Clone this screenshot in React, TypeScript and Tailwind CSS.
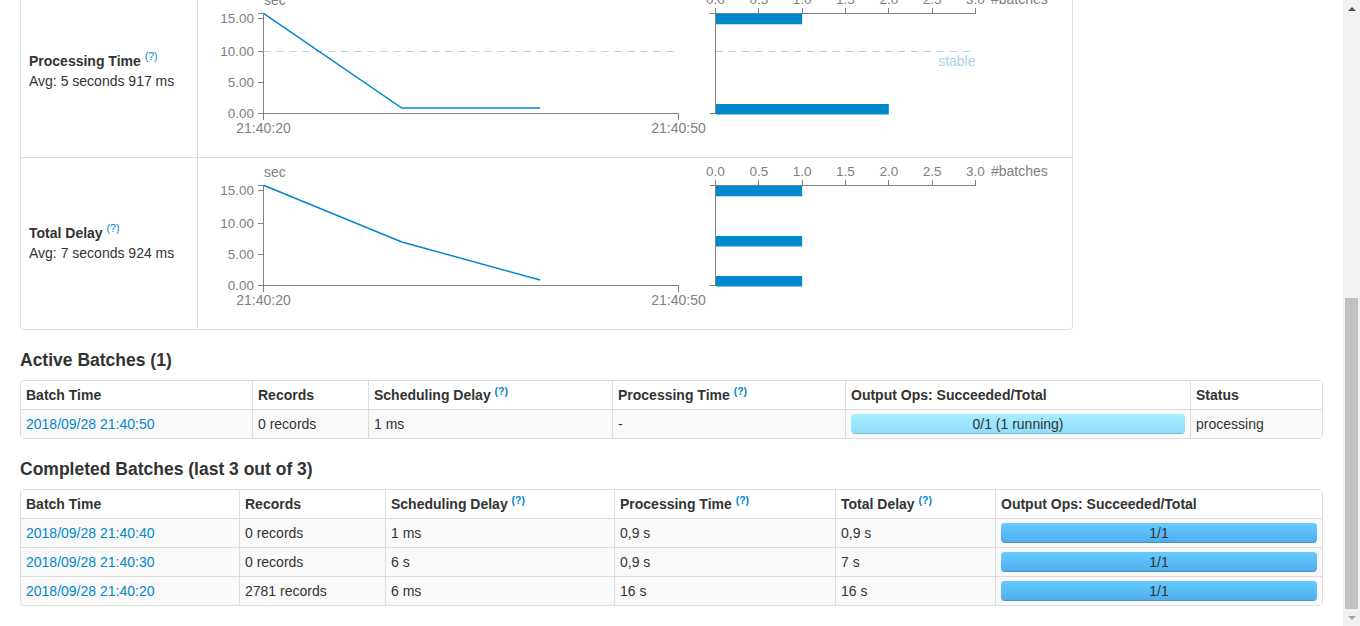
import React from "react";

const AXIS = "#808080";
const BLUE = "#0088cc";
const FONT = "'Liberation Sans', Arial, Helvetica, sans-serif";

type Bar = { y: number; v: number };

const X0 = 65.5;
const X1 = 480.5;
const xt = (i: number) => X0 + ((X1 - X0) * i) / 3;
const HX0 = 517.5;
const hx = (v: number) => HX0 + v * 86.66;

function Chart({
  pts,
  threshold,
  bars,
}: {
  pts: number[];
  threshold: boolean;
  bars: Bar[];
}) {
  const line = pts.map((y, i) => `${xt(i)},${y}`).join(" ");
  const yTicks: [string, number][] = [
    ["0.00", 127.5],
    ["5.00", 96.5],
    ["10.00", 65.5],
    ["15.00", 32.5],
  ];
  const hTicks = [0, 0.5, 1, 1.5, 2, 2.5, 3];
  return (
    <svg width={874} height={171} className="block" style={{ fontFamily: FONT }}>
      {/* line chart */}
      <text x={66} y={19} fontSize={14} fill={AXIS}>
        sec
      </text>
      <path d="M59.5,27.5H65.5V127.5H59.5" stroke={AXIS} fill="none" shapeRendering="crispEdges" />
      {yTicks.map(([l, y]) => (
        <g key={l}>
          <line x1={59.5} x2={65.5} y1={y} y2={y} stroke={AXIS} shapeRendering="crispEdges" />
          <text x={56} y={y} dy="0.32em" textAnchor="end" fontSize={13.5} fill={AXIS}>
            {l}
          </text>
        </g>
      ))}
      <path d="M65.5,133.5V127.5H480.5V133.5" stroke={AXIS} fill="none" shapeRendering="crispEdges" />
      <text x={65.5} y={146.5} textAnchor="middle" fontSize={14} fill={AXIS}>
        21:40:20
      </text>
      <text x={480.5} y={146.5} textAnchor="middle" fontSize={14} fill={AXIS}>
        21:40:50
      </text>
      {threshold && (
        <line x1={65.5} x2={480.5} y1={65.5} y2={65.5} stroke="#a8d4e8" strokeDasharray="7,6" />
      )}
      <polyline points={line} fill="none" stroke={BLUE} strokeWidth={1.5} />

      {/* histogram */}
      <path d={`M${HX0},21.5V27.5H777.5V21.5`} stroke={AXIS} fill="none" shapeRendering="crispEdges" />
      {hTicks.map((v) => (
        <g key={v}>
          <line
            x1={Math.round(hx(v) - 0.5) + 0.5}
            x2={Math.round(hx(v) - 0.5) + 0.5}
            y1={21.5}
            y2={27.5}
            stroke={AXIS}
            shapeRendering="crispEdges"
          />
          <text x={hx(v)} y={18} textAnchor="middle" fontSize={13.5} fill={AXIS}>
            {v.toFixed(1)}
          </text>
        </g>
      ))}
      <text x={793} y={18} fontSize={14} fill={AXIS}>
        #batches
      </text>
      <path d={`M511.5,27.5H${HX0}V127.5H511.5`} stroke={AXIS} fill="none" shapeRendering="crispEdges" />
      {threshold && (
        <>
          <line x1={518} x2={777.5} y1={65.5} y2={65.5} stroke="#a8d4e8" strokeDasharray="7,6" />
          <text x={777.5} y={80} textAnchor="end" fontSize={14} fill="#a8d4e8">
            stable
          </text>
        </>
      )}
      {bars.map((b, i) => (
        <rect key={i} x={518} y={b.y} width={hx(b.v) - 518} height={10.5} fill={BLUE} />
      ))}
    </svg>
  );
}

function Help() {
  return <sup className="text-[#0088cc]">(?)</sup>;
}

function Progress({ label, running }: { label: string; running?: boolean }) {
  return (
    <div className="relative h-[20px] rounded-[4px] overflow-hidden bg-linear-to-b from-[#f5f5f5] to-[#f9f9f9] shadow-[inset_0_1px_2px_rgba(0,0,0,0.1)]">
      <div
        className={
          running
            ? "h-full w-full bg-linear-to-b from-[#a6eeff] to-[#92dcfc] shadow-[inset_0_-1px_0_rgba(0,0,0,0.15)]"
            : "h-full w-full bg-linear-to-b from-[#64cbff] to-[#50acec] shadow-[inset_0_-1px_0_rgba(0,0,0,0.15)]"
        }
      />
      <span className="absolute inset-0 text-center leading-[20px] text-[#333]">{label}</span>
    </div>
  );
}

type Cell = React.ReactNode;

function DataTable({
  cols,
  head,
  rows,
}: {
  cols: string;
  head: Cell[];
  rows: Cell[][];
}) {
  return (
    <div className={`grid ${cols} border border-[#ddd] rounded-[4px] overflow-hidden`}>
      {head.map((h, i) => (
        <div
          key={"h" + i}
          className={`px-[5px] py-[4px] leading-[20px] font-bold bg-white ${i > 0 ? "border-l border-[#ddd]" : ""}`}
        >
          {h}
        </div>
      ))}
      {rows.map((r, ri) =>
        r.map((c, ci) => (
          <div
            key={ri + "-" + ci}
            className={`px-[5px] py-[4px] leading-[20px] h-[29px] bg-[#f9f9f9] border-t border-[#ddd] ${ci > 0 ? "border-l" : ""}`}
          >
            {c}
          </div>
        ))
      )}
    </div>
  );
}

function Link({ children }: { children: React.ReactNode }) {
  return <span className="text-[#0088cc]">{children}</span>;
}

export default function App() {
  const chartRows = [
    {
      label: "Processing Time",
      avg: "Avg: 5 seconds 917 ms",
      pts: [27.3, 122, 122],
      threshold: true,
      bars: [
        { y: 27.8, v: 1 },
        { y: 118, v: 2 },
      ],
    },
    {
      label: "Total Delay",
      avg: "Avg: 7 seconds 924 ms",
      pts: [27.3, 84, 122],
      threshold: false,
      bars: [
        { y: 27.8, v: 1 },
        { y: 78, v: 1 },
        { y: 118, v: 1 },
      ],
    },
  ];

  return (
    <div
      className="flex h-[626px] w-full overflow-hidden bg-white text-[14px] leading-[20px] text-[#333]"
      style={{ fontFamily: FONT }}
    >
      <div className="flex-1 min-w-0 px-[20px]">
        {/* charts table (page is scrolled: its top is cut off) */}
        <div className="-mt-[15px] w-[1053px] border border-[#ddd] rounded-[4px]">
          {chartRows.map((r, i) => (
            <div key={r.label} className={`flex ${i > 0 ? "border-t border-[#ddd]" : ""}`}>
              <div className="w-[176px] h-[171px] flex flex-col justify-center pl-[8px] pb-[2px]">
                <div>
                  <strong>{r.label}</strong> <Help />
                </div>
                <div>{r.avg}</div>
              </div>
              <div className="w-[875px] h-[171px] border-l border-[#ddd]">
                <Chart pts={r.pts} threshold={r.threshold} bars={r.bars} />
              </div>
            </div>
          ))}
        </div>

        <h4 className="mt-[20px] mb-[10px] text-[17.5px] leading-[20px] font-bold">Active Batches (1)</h4>
        <DataTable
          cols="grid-cols-[231px_116px_244px_233px_345px_132px]"
          head={[
            "Batch Time",
            "Records",
            <>
              Scheduling Delay <Help />
            </>,
            <>
              Processing Time <Help />
            </>,
            "Output Ops: Succeeded/Total",
            "Status",
          ]}
          rows={[
            [
              <Link>2018/09/28 21:40:50</Link>,
              "0 records",
              "1 ms",
              "-",
              <Progress label="0/1 (1 running)" running />,
              "processing",
            ],
          ]}
        />

        <h4 className="mt-[20px] mb-[10px] text-[17.5px] leading-[20px] font-bold">
          Completed Batches (last 3 out of 3)
        </h4>
        <DataTable
          cols="grid-cols-[218px_146px_229px_221px_160px_327px]"
          head={[
            "Batch Time",
            "Records",
            <>
              Scheduling Delay <Help />
            </>,
            <>
              Processing Time <Help />
            </>,
            <>
              Total Delay <Help />
            </>,
            "Output Ops: Succeeded/Total",
          ]}
          rows={[
            [<Link>2018/09/28 21:40:40</Link>, "0 records", "1 ms", "0,9 s", "0,9 s", <Progress label="1/1" />],
            [<Link>2018/09/28 21:40:30</Link>, "0 records", "6 s", "0,9 s", "7 s", <Progress label="1/1" />],
            [<Link>2018/09/28 21:40:20</Link>, "2781 records", "6 ms", "16 s", "16 s", <Progress label="1/1" />],
          ]}
        />
      </div>

      {/* scrollbar */}
      <div className="w-[17px] h-[626px] shrink-0 bg-[#f1f1f1] flex flex-col">
        <div className="h-[17px] flex items-center justify-center">
          <svg width="8" height="4" viewBox="0 0 8 4">
            <path d="M0,4L4,0L8,4Z" fill="#505050" />
          </svg>
        </div>
        <div className="h-[281px]" />
        <div className="h-[311px] mx-[2px] bg-[#c1c1c1]" />
        <div className="h-[17px] flex items-center justify-center">
          <svg width="8" height="4" viewBox="0 0 8 4">
            <path d="M0,0L8,0L4,4Z" fill="#a3a3a3" />
          </svg>
        </div>
      </div>
    </div>
  );
}
